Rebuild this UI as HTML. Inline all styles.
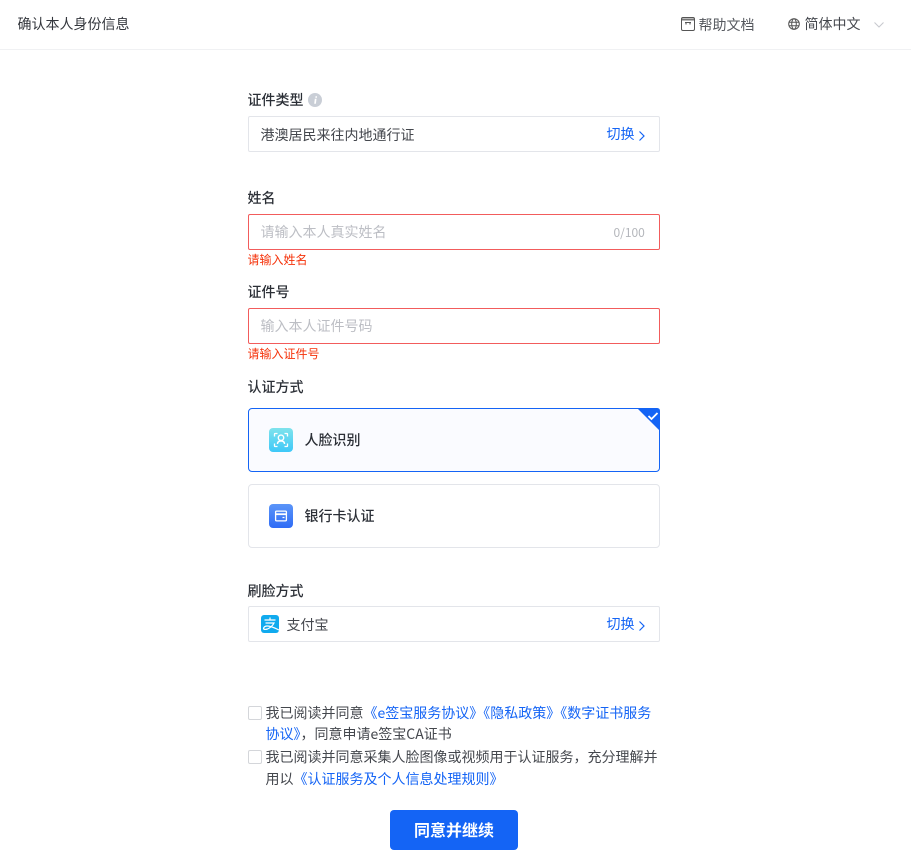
<!DOCTYPE html>
<html lang="zh-CN">
<head>
<meta charset="utf-8">
<title>确认本人身份信息</title>
<style>
html,body{margin:0;padding:0;background:#fff}
body{position:relative;width:911px;height:867px;overflow:hidden;font-family:"Noto Sans CJK SC","Liberation Sans",sans-serif;font-size:14px;color:#333}
.a{position:absolute;white-space:nowrap}
.t{height:22px;line-height:22px;margin-left:-.5px}
.lb{font-weight:500;color:#2b2f36;font-size:14px}
.box{position:absolute;left:248px;width:410px;height:34px;border:1px solid #e3e5ea;border-radius:2px;background:#fff}
.err{border-color:#f25c5c}
.ph{color:#bcbec4}
.em{color:#f5320a;font-size:12px;height:18px;line-height:18px;margin-left:-.5px}
.lnk{color:#1464f5}
.cb{position:absolute;left:248px;width:12px;height:12px;border:1px solid #d4d6da;border-radius:2px;background:#fff}
.card{position:absolute;left:248px;width:410px;height:62px;border-radius:4px;border:1px solid #e3e5ea;background:#fff}
svg{position:absolute;display:block}
</style>
</head>
<body>
<div class="a" style="left:0;top:49px;width:911px;height:1px;background:#f0f1f3"></div>
<div class="a t" style="left:18px;top:13px;color:#33363c">确认本人身份信息</div>

<svg style="left:681px;top:17px" width="14" height="14" viewBox="0 0 14 14" fill="none" stroke="#555" stroke-width="1"><rect x=".5" y=".5" width="13" height="13" rx="1.500"/><path d="M1 2.500h12" stroke-width="2" stroke="#777"/><path d="M4 5.500h6M5 5.500v2M9 5.500v2" stroke-width="1.100"/></svg>
<div class="a t" style="left:699px;top:14px;color:#55585e">帮助文档</div>
<svg style="left:788px;top:18px" width="12" height="12" viewBox="0 0 12 12" fill="none" stroke="#555" stroke-width="1"><circle cx="6" cy="6" r="5.300"/><ellipse cx="6" cy="6" rx="2.300" ry="5.300"/><path d="M.7 4.300h10.600M.7 7.700h10.600"/></svg>
<div class="a t" style="left:805px;top:13px;color:#44474d">简体中文</div>
<svg style="left:873px;top:21px" width="12" height="8" viewBox="0 0 12 8" fill="none" stroke="#c8cacf" stroke-width="1.100"><path d="M1.500 1.500l4.500 4.500 4.500-4.500"/></svg>

<div class="a t lb" style="left:248px;top:89px">证件类型</div>
<svg style="left:308px;top:93px" width="14" height="14" viewBox="0 0 14 14"><circle cx="7" cy="7" r="7" fill="#c9ced6"/><path d="M7.500 3.200h1.500v1.500H7.300zM6.800 5.800h1.700L7.900 10.800H6.200z" fill="#fff"/></svg>
<div class="box" style="top:116px"></div>
<div class="a t" style="left:261px;top:124px;color:#44474d">港澳居民来往内地通行证</div>
<div class="a t lnk" style="left:607px;top:123px">切换</div>
<svg style="left:638px;top:130px" width="8" height="12" viewBox="0 0 8 12" fill="none" stroke="#1464f5" stroke-width="1.200"><path d="M1.500 1.500l4.500 4.500-4.500 4.500"/></svg>

<div class="a t lb" style="left:248px;top:187px">姓名</div>
<div class="box err" style="top:214px"></div>
<div class="a t ph" style="left:261px;top:221px">请输入本人真实姓名</div>
<div class="a t" style="left:614px;top:222px;font-size:12px;color:#b4b6bb">0/100</div>
<div class="a em" style="left:248px;top:251px">请输入姓名</div>

<div class="a t lb" style="left:248px;top:281px">证件号</div>
<div class="box err" style="top:308px"></div>
<div class="a t ph" style="left:261px;top:315px">输入本人证件号码</div>
<div class="a em" style="left:248px;top:345px">请输入证件号</div>

<div class="a t lb" style="left:248px;top:376px">认证方式</div>
<div class="card" style="top:408px;border-color:#1464f5;background:#fafbff"></div>
<svg style="left:637px;top:408px" width="23" height="23" viewBox="0 0 23 23"><path d="M0 0H20Q23 0 23 3V23Z" fill="#1464f5"/><path d="M11.500 8l3 3 6-6" fill="none" stroke="#fff" stroke-width="1.800"/></svg>
<svg style="left:269px;top:428px" width="24" height="24" viewBox="0 0 24 24">
<defs><linearGradient id="g1" x1="0" y1="0" x2="0" y2="1"><stop offset="0" stop-color="#7fe3ec"/><stop offset="1" stop-color="#3ec8f8"/></linearGradient><linearGradient id="g2" x1="0" y1="0" x2="0" y2="1"><stop offset="0" stop-color="#5b95f8"/><stop offset="1" stop-color="#2f6cf6"/></linearGradient></defs>
<rect width="24" height="24" rx="4" fill="url(#g1)"/>
<path d="M5.500 8.500V6Q5.500 5.500 6 5.500H8.500M15.500 5.500H18Q18.500 5.500 18.500 6V8.500M18.500 15.500V18Q18.500 18.500 18 18.500H15.500M8.500 18.500H6Q5.500 18.500 5.500 18V15.500" fill="none" stroke="#fff" stroke-width="1.300"/>
<circle cx="12" cy="9.800" r="2.700" fill="none" stroke="#fff" stroke-width="1.400"/><path d="M8.500 16q0-3 3.500-3t3.500 3" fill="none" stroke="#fff" stroke-width="1.400"/></svg>
<div class="a t lb" style="left:305px;top:429px">人脸识别</div>

<div class="card" style="top:484px"></div>
<svg style="left:269px;top:504px" width="24" height="24" viewBox="0 0 24 24"><rect width="24" height="24" rx="4" fill="url(#g2)"/><rect x="6.600" y="7.100" width="10.800" height="9.800" rx="1" fill="none" stroke="#fff" stroke-width="1.300"/><path d="M6.600 10.200h10.800" stroke="#fff" stroke-width="1.800"/><path d="M13.500 13.500h2" stroke="#fff" stroke-width="1.200"/></svg>
<div class="a t lb" style="left:305px;top:505px">银行卡认证</div>

<div class="a t lb" style="left:248px;top:580px">刷脸方式</div>
<div class="box" style="top:606px"></div>
<svg style="left:261px;top:615px" width="18" height="18" viewBox="0 0 18 18"><rect width="18" height="18" rx="3" fill="#10aaee"/><path d="M3.500 5H14.500M9 2.500V5M4.500 8H13Q11 12 6.500 14Q3 15 2.500 13.500Q3 11 6.500 11Q10 11 18 15" fill="none" stroke="#fff" stroke-width="1.200"/></svg>
<div class="a t" style="left:287px;top:614px;color:#44474d">支付宝</div>
<div class="a t lnk" style="left:607px;top:613px">切换</div>
<svg style="left:638px;top:620px" width="8" height="12" viewBox="0 0 8 12" fill="none" stroke="#1464f5" stroke-width="1.200"><path d="M1.500 1.500l4.500 4.500-4.500 4.500"/></svg>

<div class="cb" style="top:706px"></div>
<div class="a t" style="left:266px;top:702px;color:#44474d">我已阅读并同意<span class="lnk">《e签宝服务协议》《隐私政策》《数字证书服务</span></div>
<div class="a t" style="left:266px;top:723px;color:#44474d"><span class="lnk">协议》</span>，同意申请e签宝CA证书</div>
<div class="cb" style="top:750px"></div>
<div class="a t" style="left:266px;top:746px;color:#44474d">我已阅读并同意采集人脸图像或视频用于认证服务，充分理解并</div>
<div class="a t" style="left:266px;top:768px;color:#44474d">用以<span class="lnk">《认证服务及个人信息处理规则》</span></div>

<div class="a" style="left:390px;top:809px;width:128px;height:40px;color:#fff;font-size:16px;font-weight:700;line-height:40px;text-align:center;z-index:1">同意并继续</div>
<div class="a" style="left:390px;top:810px;width:128px;height:40px;border-radius:4px;background:#1464f5"></div>
</body>
</html>
